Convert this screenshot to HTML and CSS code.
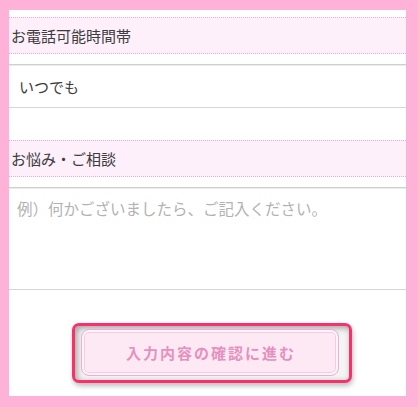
FILE: index.html
```html
<!DOCTYPE html>
<html lang="ja">
<head>
<meta charset="utf-8">
<link rel="stylesheet" href="styles.css">
</head>
<body>
<div class="page">
  <div class="label">お電話可能時間帯</div>
  <div class="field field-input">いつでも</div>
  <div class="label label-second">お悩み・ご相談</div>
  <div class="field field-area"><span class="placeholder">例）何かございましたら、ご記入ください。</span></div>
  <div class="btn-frame">
    <button class="btn" type="button">入力内容の確認に進む</button>
  </div>
</div>
</body>
</html>
```

FILE: styles.css
```css
html, body {
  margin: 0;
  padding: 0;
}
body {
  background: #ffb2d8;
  font-family: "Noto Sans CJK JP", "Noto Sans", sans-serif;
  width: 418px;
  height: 407px;
  overflow: hidden;
}
.page {
  margin: 10px 0 0 9px;
  width: 397px;
  height: 386px;
  background: #fff;
  padding-top: 7px;
  box-sizing: border-box;
  display: flex;
  flex-direction: column;
}
.label {
  height: 35px;
  border-top: 1px dotted #eeaad8;
  border-bottom: 1px dotted #eeaad8;
  background: #fdf0fa;
  display: flex;
  align-items: center;
  padding-left: 2px;
  font-size: 15px;
  color: #3c3c3c;
}
.label-second {
  margin-top: 32px;
}
.field {
  margin-top: 10px;
  border-top: 1px solid #cfcfcf;
  border-bottom: 1px solid #d6d6d6;
  box-shadow: inset 0 1px 0 #ececec;
  font-size: 15px;
  color: #3c3c3c;
  box-sizing: border-box;
}
.field-input {
  height: 44px;
  display: flex;
  align-items: center;
  padding-left: 10px;
}
.field-area {
  height: 103px;
  padding: 8px 8px;
  line-height: 24px;
}
.placeholder {
  color: #b2b2b2;
  font-size: 15.5px;
}
.btn-frame {
  margin: 33px 0 0 63px;
  width: 280px;
  height: 60px;
  box-sizing: border-box;
  border: 3px solid #f8306c;
  border-radius: 7px;
  background: #f4f4f4;
  box-shadow: inset 2px 2px 6px rgba(0, 0, 0, 0.35), 1px 3px 5px rgba(0, 0, 0, 0.25);
  padding: 3px 10px 5px 6px;
  display: flex;
}
.btn {
  flex: 1;
  height: 47px;
  border: 1px solid #ebb0d2;
  border-radius: 8px;
  background: #fce9f4;
  box-shadow: inset 0 0 0 2px #fdf3f9, inset 0 0 0 3px #f3cde3;
  color: #e690bf;
  font-family: "Noto Sans CJK JP", "Noto Sans", sans-serif;
  font-size: 15px;
  font-weight: bold;
  letter-spacing: 2px;
  padding: 0 0 0 2px;
  cursor: pointer;
}
```
